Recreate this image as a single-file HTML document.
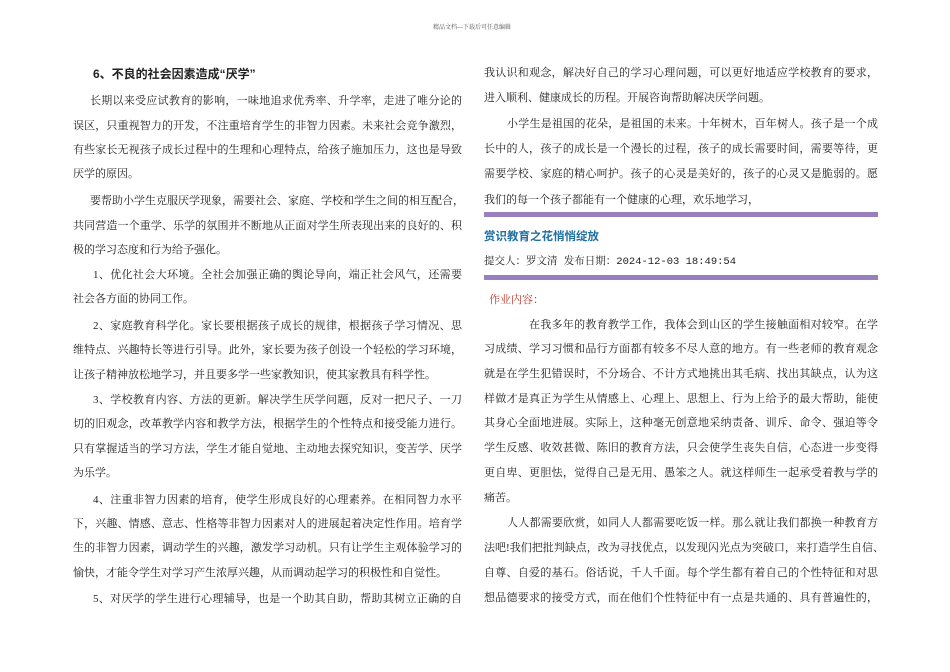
<!DOCTYPE html>
<html><head><meta charset="utf-8"><style>
body{margin:0;width:950px;height:672px;background:#fff;position:relative;overflow:hidden;font-family:"Liberation Serif","Noto Serif CJK SC",serif;color:#222;}
.l{position:absolute;font-size:11px;line-height:16px;white-space:nowrap;text-align:justify;text-align-last:justify;}
.L{left:73px;width:389px}
.R{left:484px;width:394px}
.n{text-align-last:left}
.bar{position:absolute;left:484px;width:394px;height:5px;background:#9a7fbd}
</style></head><body>
<div class="l" style="left:433px;top:24px;font-size:6px;line-height:8px;color:#555">精品文档---下载后可任意编辑</div>

<div class="l L n" style="top:66px;font-weight:bold;font-size:12px;padding-left:20px;width:369px;font-family:'Liberation Sans','Noto Sans CJK SC',sans-serif">6、不良的社会因素造成“厌学”</div>
<div class="l L" style="top:93px;padding-left:17px;width:372px">长期以来受应试教育的影响，一味地追求优秀率、升学率，走进了唯分论的</div>
<div class="l L" style="top:118px">误区，只重视智力的开发，不注重培育学生的非智力因素。未来社会竞争激烈，</div>
<div class="l L" style="top:142px">有些家长无视孩子成长过程中的生理和心理特点，给孩子施加压力，这也是导致</div>
<div class="l L n" style="top:166px">厌学的原因。</div>
<div class="l L" style="top:193px;padding-left:17px;width:372px">要帮助小学生克服厌学现象，需要社会、家庭、学校和学生之间的相互配合，</div>
<div class="l L" style="top:218px">共同营造一个重学、乐学的氛围并不断地从正面对学生所表现出来的良好的、积</div>
<div class="l L n" style="top:242px">极的学习态度和行为给予强化。</div>
<div class="l L" style="top:267px;padding-left:20px;width:369px">1、优化社会大环境。全社会加强正确的舆论导向，端正社会风气，还需要</div>
<div class="l L n" style="top:291px">社会各方面的协同工作。</div>
<div class="l L" style="top:318px;padding-left:20px;width:369px">2、家庭教育科学化。家长要根据孩子成长的规律，根据孩子学习情况、思</div>
<div class="l L" style="top:342px">维特点、兴趣特长等进行引导。此外，家长要为孩子创设一个轻松的学习环境，</div>
<div class="l L n" style="top:367px">让孩子精神放松地学习，并且要多学一些家教知识，使其家教具有科学性。</div>
<div class="l L" style="top:392px;padding-left:20px;width:369px">3、学校教育内容、方法的更新。解决学生厌学问题，反对一把尺子、一刀</div>
<div class="l L" style="top:416px">切的旧观念，改革教学内容和教学方法，根据学生的个性特点和接受能力进行。</div>
<div class="l L" style="top:441px">只有掌握适当的学习方法，学生才能自觉地、主动地去探究知识，变苦学、厌学</div>
<div class="l L n" style="top:465px">为乐学。</div>
<div class="l L" style="top:492px;padding-left:20px;width:369px">4、注重非智力因素的培育，使学生形成良好的心理素养。在相同智力水平</div>
<div class="l L" style="top:516px">下，兴趣、情感、意志、性格等非智力因素对人的进展起着决定性作用。培育学</div>
<div class="l L" style="top:540px">生的非智力因素，调动学生的兴趣，激发学习动机。只有让学生主观体验学习的</div>
<div class="l L n" style="top:565px">愉快，才能令学生对学习产生浓厚兴趣，从而调动起学习的积极性和自觉性。</div>
<div class="l L" style="top:591px;padding-left:20px;width:369px">5、对厌学的学生进行心理辅导，也是一个助其自助，帮助其树立正确的自</div>

<div class="l R" style="top:65px">我认识和观念，解决好自己的学习心理问题，可以更好地适应学校教育的要求，</div>
<div class="l R n" style="top:90px">进入顺利、健康成长的历程。开展咨询帮助解决厌学问题。</div>
<div class="l R" style="top:116px;padding-left:23px;width:371px">小学生是祖国的花朵，是祖国的未来。十年树木，百年树人。孩子是一个成</div>
<div class="l R" style="top:141px">长中的人，孩子的成长是一个漫长的过程，孩子的成长需要时间，需要等待，更</div>
<div class="l R" style="top:166px">需要学校、家庭的精心呵护。孩子的心灵是美好的，孩子的心灵又是脆弱的。愿</div>
<div class="l R n" style="top:192px">我们的每一个孩子都能有一个健康的心理，欢乐地学习，</div>
<div class="bar" style="top:212px"></div>
<div class="l R n" style="top:229px;color:#1f6f9f;font-weight:bold;font-size:11.5px;font-family:'Liberation Sans','Noto Sans CJK SC',sans-serif">赏识教育之花悄悄绽放</div>
<div class="l R n" style="top:254px;font-family:'Liberation Mono','Noto Serif CJK SC',monospace;font-size:10.5px">提交人：罗文清 发布日期：2024-12-03 18:49:54</div>
<div class="bar" style="top:275px"></div>
<div class="l R n" style="top:292px;color:#c0392b;padding-left:5px">作业内容：</div>
<div class="l R" style="top:317px;padding-left:45px;width:349px">在我多年的教育教学工作，我体会到山区的学生接触面相对较窄。在学</div>
<div class="l R" style="top:341px">习成绩、学习习惯和品行方面都有较多不尽人意的地方。有一些老师的教育观念</div>
<div class="l R" style="top:366px">就是在学生犯错误时，不分场合、不计方式地挑出其毛病、找出其缺点，认为这</div>
<div class="l R" style="top:391px">样做才是真正为学生从情感上、心理上、思想上、行为上给予的最大帮助，能使</div>
<div class="l R" style="top:415px">其身心全面地进展。实际上，这种毫无创意地采纳责备、训斥、命令、强迫等令</div>
<div class="l R" style="top:440px">学生反感、收效甚微、陈旧的教育方法，只会使学生丧失自信，心态进一步变得</div>
<div class="l R" style="top:465px">更自卑、更胆怯，觉得自己是无用、愚笨之人。就这样师生一起承受着教与学的</div>
<div class="l R n" style="top:490px">痛苦。</div>
<div class="l R" style="top:515px;padding-left:23px;width:371px">人人都需要欣赏，如同人人都需要吃饭一样。那么就让我们都换一种教育方</div>
<div class="l R" style="top:540px;width:400px">法吧!我们把批判缺点，改为寻找优点，以发现闪光点为突破口，来打造学生自信、</div>
<div class="l R" style="top:565px">自尊、自爱的基石。俗话说，千人千面。每个学生都有着自己的个性特征和对思</div>
<div class="l R" style="top:590px">想品德要求的接受方式，而在他们个性特征中有一点是共通的、具有普遍性的，</div>
</body></html>
